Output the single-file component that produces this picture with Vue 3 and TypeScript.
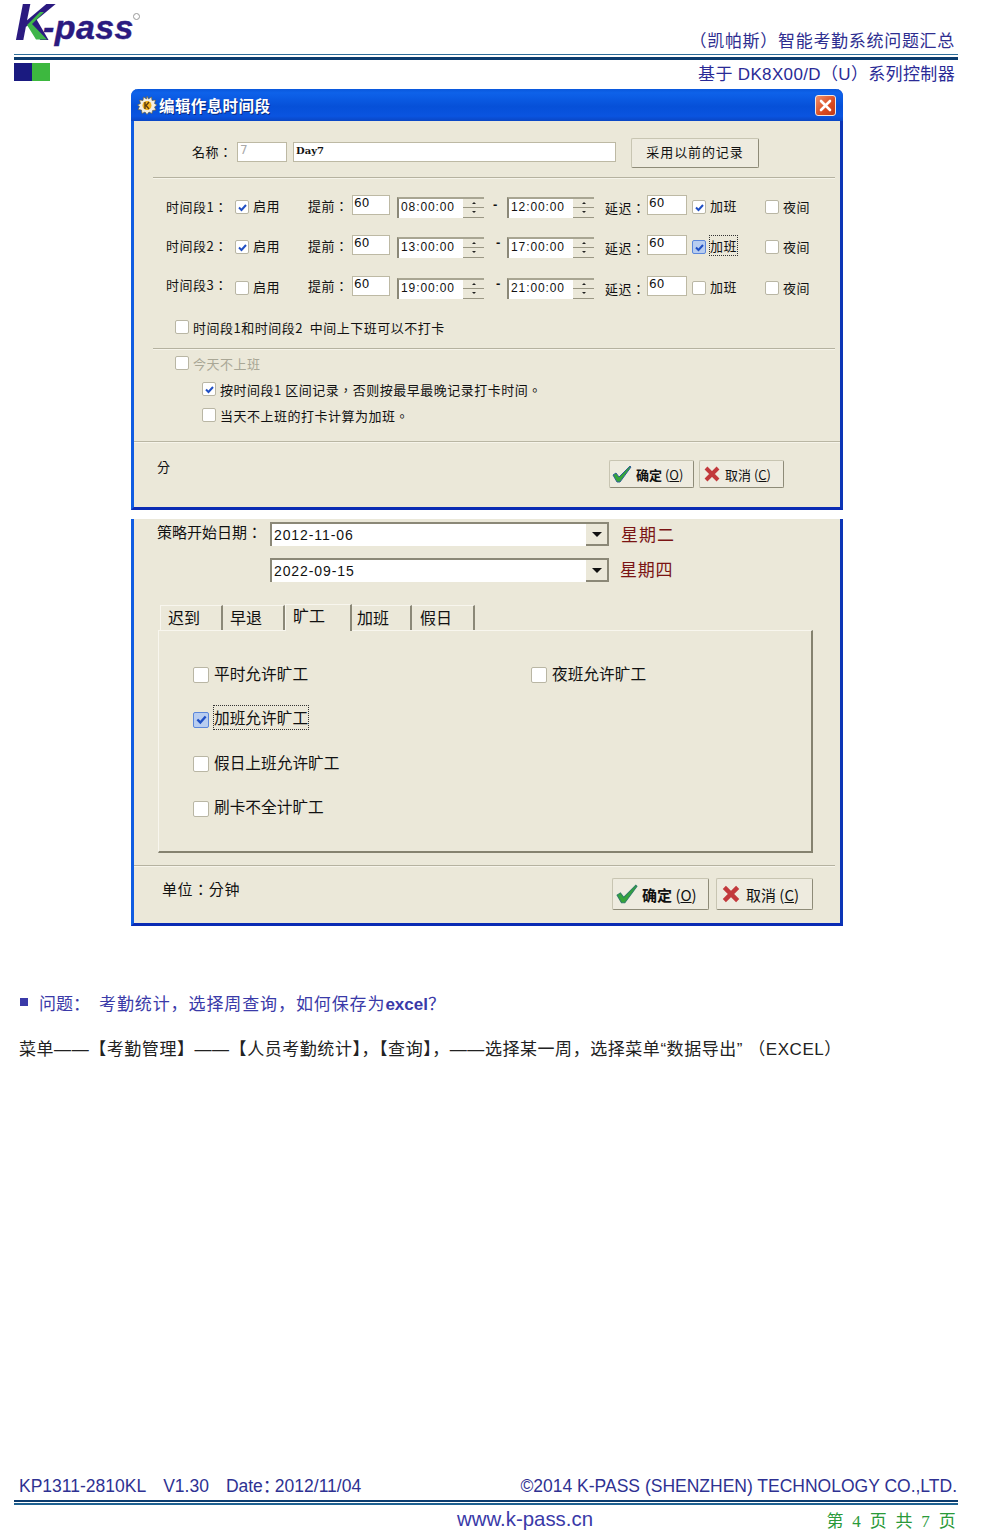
<script setup lang="ts">
interface Row {
  label: string
  early: boolean
  start: string
  end: string
  ot: boolean
  focus: boolean
  cls: string
}
const rows: Row[] = [
  { label: '时间段1：', early: true, start: '08:00:00', end: '12:00:00', ot: true, focus: false, cls: 'r1' },
  { label: '时间段2：', early: true, start: '13:00:00', end: '17:00:00', ot: true, focus: true, cls: 'r2' },
  { label: '时间段3：', early: false, start: '19:00:00', end: '21:00:00', ot: false, focus: false, cls: 'r3' }
]
const tabs = ['迟到', '早退', '旷工', '加班', '假日']
</script>

<template>
  <div class="page">
    <header class="head">
      <svg class="logo" width="130" height="50" viewBox="0 0 130 50">
        <text x="1" y="40" class="k">K</text>
        <polygon points="30,12 18,24 33,39.500 22,39.500 13,25 26,12" fill="#3fb54a" />
        <text x="29" y="39" class="pass">-pass</text>
        <circle cx="122.500" cy="16.500" r="3" fill="none" stroke="#999" stroke-width="1" />
      </svg>
      <div class="doc-title">（凯帕斯）智能考勤系统问题汇总</div>
    </header>
    <div class="rule top"><i></i><b></b></div>
    <div class="sub">
      <div class="squares"><span class="navy"></span><span class="green"></span></div>
      <div class="doc-sub">基于 DK8X00/D（U）系列控制器</div>
    </div>

    <section class="dlg first">
      <div class="titlebar">
        <svg width="20" height="20" viewBox="0 0 20 20" class="gear">
          <path d="M10 1l1.500 3 3-2 .5 3.500 3.500-.5-1 3.500 2.500 1.500-2.500 2 1.500 3-3.500.5-.5 3-3-1.500-2 2.500-2-2.500-3 1.500-.5-3.500-3.500-.5 1.500-3L.5 10l3-1.500-1-3.500 3.500.5.500-3.500 3 2z" fill="#f3f0e4" stroke="#6a5a2a" stroke-width=".6" />
          <circle cx="10" cy="10.500" r="4.500" fill="#f2b21e" />
          <path d="M8 7v7M12 7l-3 3.500 3 3.500" stroke="#5a3d10" stroke-width="1.400" fill="none" />
        </svg>
        <span class="title-text">编辑作息时间段</span>
        <span class="close">
          <svg width="13" height="13" viewBox="0 0 13 13"><path d="M2 2l9 9M11 2l-9 9" stroke="#fff" stroke-width="2.600" stroke-linecap="round" /></svg>
        </span>
      </div>
      <div class="body">
        <div class="name-row">
          <span class="lbl name-lbl">名称：</span>
          <span class="input id-in">7</span>
          <span class="input day-in">Day7</span>
          <span class="xp-btn prev">采用以前的记录</span>
        </div>
        <div class="sep inset"></div>

        <div class="slots">
          <div v-for="r in rows" :key="r.label" class="slot" :class="r.cls">
            <span class="lbl slot-lbl">{{ r.label }}</span>
            <label class="chk-line"><span class="cb" :class="{ on: r.early }"><svg v-if="r.early" width="11" height="11" viewBox="0 0 11 11"><path d="M2 5.500l2.500 2.500L9 3" fill="none" stroke="#1f4fc4" stroke-width="2" /></svg></span>启用</label>
            <span class="lbl early">提前：</span>
            <span class="input num">60</span>
            <span class="time"><em>{{ r.start }}</em><span class="spin"><i class="up"></i><i class="down"></i></span></span>
            <span class="dash">-</span>
            <span class="time"><em>{{ r.end }}</em><span class="spin"><i class="up"></i><i class="down"></i></span></span>
            <span class="lbl late">延迟：</span>
            <span class="input num wide">60</span>
            <label class="chk-line"><span class="cb" :class="{ on: r.ot, hot: r.focus }"><svg v-if="r.ot" width="11" height="11" viewBox="0 0 11 11"><path d="M2 5.500l2.500 2.500L9 3" fill="none" stroke="#1f4fc4" stroke-width="2" /></svg></span><span :class="{ dotted: r.focus }">加班</span></label>
            <label class="chk-line night"><span class="cb"></span>夜间</label>
          </div>
        </div>

        <label class="chk-line free"><span class="cb"></span>时间段1和时间段2&nbsp; 中间上下班可以不打卡</label>
        <div class="sep inset s2"></div>
        <label class="chk-line free off"><span class="cb"></span>今天不上班</label>
        <label class="chk-line nested n1"><span class="cb on"><svg width="11" height="11" viewBox="0 0 11 11"><path d="M2 5.500l2.500 2.500L9 3" fill="none" stroke="#1f4fc4" stroke-width="2" /></svg></span>按时间段1 区间记录，否则按最早最晚记录打卡时间。</label>
        <label class="chk-line nested n2"><span class="cb"></span>当天不上班的打卡计算为加班。</label>
        <div class="sep full"></div>
        <div class="foot">
          <span class="lbl unit">分</span>
          <div class="btns">
            <span class="xp-btn act ok">
              <svg width="22" height="20" viewBox="0 0 22 20"><path d="M2 11l3-2 3 4L19 2l1 1L9 18H6z" fill="#35a53a" stroke="#2f5f96" stroke-width="1" /></svg>
              <span><b>确定</b> (<u>O</u>)</span>
            </span>
            <span class="xp-btn act no">
              <svg width="18" height="18" viewBox="0 0 18 18"><path d="M3 3l12 12M15 3L3 15" stroke="#c2393c" stroke-width="4" /></svg>
              <span>取消 (<u>C</u>)</span>
            </span>
          </div>
        </div>
      </div>
    </section>

    <section class="dlg second">
      <div class="body b2">
        <div class="date-row d1">
          <span class="lbl date-lbl">策略开始日期：</span>
          <span class="combo"><em>2012-11-06</em><span class="drop"><i></i></span></span>
          <span class="weekday">星期二</span>
        </div>
        <div class="date-row d2">
          <span class="date-lbl"></span>
          <span class="combo"><em>2022-09-15</em><span class="drop"><i></i></span></span>
          <span class="weekday">星期四</span>
        </div>
        <div class="tabs">
          <span v-for="(t, i) in tabs" :key="t" class="tab" :class="{ active: i === 2 }">{{ t }}</span>
        </div>
        <div class="panel">
          <div class="panel-grid">
            <label class="chk-big"><span class="cb big"></span>平时允许旷工</label>
            <label class="chk-big"><span class="cb big"></span>夜班允许旷工</label>
            <label class="chk-big"><span class="cb big on hot"><svg width="13" height="13" viewBox="0 0 11 11"><path d="M2 5.500l2.500 2.500L9 3" fill="none" stroke="#1f4fc4" stroke-width="2" /></svg></span><span class="dotted">加班允许旷工</span></label>
            <span></span>
            <label class="chk-big"><span class="cb big"></span>假日上班允许旷工</label>
            <span></span>
            <label class="chk-big"><span class="cb big"></span>刷卡不全计旷工</label>
          </div>
        </div>
        <div class="sep w2"></div>
        <div class="foot f2">
          <span class="lbl unit2">单位：分钟</span>
          <div class="btns big-btns">
            <span class="xp-btn act2 ok2">
              <svg width="26" height="22" viewBox="0 0 22 20"><path d="M2 11l3-2 3 4L19 2l1 1L9 18H6z" fill="#35a53a" stroke="#2f7f66" stroke-width="1" /></svg>
              <span><b>确定</b> (<u>O</u>)</span>
            </span>
            <span class="xp-btn act2 no2">
              <svg width="20" height="20" viewBox="0 0 18 18"><path d="M3 3l12 12M15 3L3 15" stroke="#c2393c" stroke-width="4" /></svg>
              <span>取消 (<u>C</u>)</span>
            </span>
          </div>
        </div>
      </div>
    </section>

    <div class="question"><span class="bullet"></span><span class="q1">问题：</span><span class="q2">考勤统计，选择周查询，如何保存为<b>excel</b>？</span></div>
    <p class="answer">菜单——【考勤管理】——【人员考勤统计】，【查询】，——选择某一周，选择菜单“数据导出” （EXCEL）</p>

    <footer class="page-foot">
      <div class="foot-top">
        <span class="ver"><span>KP1311-2810KL</span><span>V1.30</span><span>Date<span class="fw">：</span>2012/11/04</span></span>
        <span>©2014 K-PASS (SHENZHEN) TECHNOLOGY CO.,LTD.</span>
      </div>
      <div class="rule bottom"><i></i><b></b></div>
      <div class="foot-bottom">
        <span class="site">www.k-pass.cn</span>
        <span class="pageno">第 4 页 共 7 页</span>
      </div>
    </footer>
  </div>
</template>

<style>
html, body { margin: 0; background: #fff; }
</style>

<style scoped>
.page {
  width: 1000px;
  height: 1537px;
  box-sizing: border-box;
  padding: 0 42px 0 14px;
  display: flex;
  flex-direction: column;
  overflow: hidden;
  font-family: "Liberation Sans", "Noto Sans CJK SC", sans-serif;
  color: #111;
}
.head { height: 54px; display: flex; justify-content: space-between; align-items: flex-end; }
.logo { align-self: flex-start; overflow: visible; }
.k { font: italic 700 52px "Liberation Sans", sans-serif; fill: #2b1a80; }
.pass { font: italic 700 34px "Liberation Sans", sans-serif; fill: #2b1a80; stroke: #2b1a80; stroke-width: .4px; letter-spacing: .4px; }
.doc-title { color: #2e2e90; font: 17px "Liberation Serif", "Noto Sans CJK SC", serif; padding: 0 3px 1px 0; line-height: 22px; letter-spacing: .7px; }
.rule i { display: block; height: 1px; background: #2d6d99; }
.rule b { display: block; height: 3px; background: #0c3c6e; margin-top: 2px; }
.rule.top { height: 6px; }
.sub { height: 29px; display: flex; justify-content: space-between; align-items: flex-start; }
.squares { display: flex; height: 18px; margin-top: 3px; }
.squares span { width: 18px; }
.navy { background: #1a1a80; }
.green { background: #3db83f; }
.doc-sub { color: #2a2a96; font: 17px/22px "Liberation Sans", "Noto Sans CJK SC", sans-serif; padding: 4px 3px 0 0; letter-spacing: .35px; }

.dlg { margin-left: 117px; width: 712px; box-sizing: border-box; background: #ebe8d9; }
.first { height: 421px; border-radius: 7px 7px 0 0; border-left: 3px solid #0f5ce2; border-right: 3px solid #0c35b6; border-bottom: 3px solid #0a2bb4; display: flex; flex-direction: column; }
.titlebar {
  height: 32px; margin: 0 -3px; padding: 0 7px 0 6px;
  border-radius: 7px 7px 0 0;
  background: linear-gradient(#0a58dc 0%, #0e62ea 12%, #0650d8 55%, #0a54e0 85%, #0a46c4 100%);
  display: flex; align-items: center; gap: 2px;
  flex: none;
}
.title-text { color: #fff; font: 700 15.500px "Noto Sans CJK SC", sans-serif; letter-spacing: .4px; text-shadow: 1px 1px 0 #0a2a80; }
.close { margin-left: auto; width: 21px; height: 21px; border: 1px solid #f2e6e0; border-radius: 3px; background: linear-gradient(135deg, #f0906a, #d94a20 60%, #c03a18); display: flex; align-items: center; justify-content: center; box-sizing: border-box; }
.body { flex: 1; display: flex; flex-direction: column; font-size: 13px; }
.lbl, .chk-line { font: 13px "Noto Sans CJK TC", "Noto Sans CJK SC", sans-serif; letter-spacing: .5px; color: #111; white-space: nowrap; }
.name-row { display: flex; align-items: center; height: 33px; margin-top: 14px; padding-left: 58px; }
.name-lbl { width: 45px; }
.input { background: #fff; box-sizing: border-box; border: 1px solid #bdb9a4; font: 12px "DejaVu Sans", sans-serif; line-height: 14px; display: block; }
.id-in { width: 50px; height: 20px; color: #aaa; padding-left: 2px; }
.day-in { width: 323px; height: 20px; margin-left: 6px; padding-left: 2px; font: 700 10px "DejaVu Serif", serif; line-height: 15px; }
.xp-btn { box-sizing: border-box; display: flex; align-items: center; justify-content: center; background: #eeebdf; border: 1px solid #c8c5b2; border-right-color: #8e8b78; border-bottom-color: #8e8b78; border-radius: 2px; font: 13px "Noto Sans CJK SC", sans-serif; }
.prev { width: 128px; height: 30px; margin: 2px 0 0 15px; padding-bottom: 3px; letter-spacing: .9px; }
.sep.inset { margin: 0 5px 0 19px; border-top: 1px solid #b5b2a0; border-bottom: 1px solid #f6f4ea; }
.name-row + .sep { margin-top: 9px; }
.slots { margin-top: 8px; }
.slot { display: grid; grid-template-columns: 69px 73px 44px 45px 93px 17px 98px 42px 45px 73px 60px; align-items: center; padding-left: 32px; height: 40px; }
.slot.r3 { height: 42px; }
.chk-line { display: flex; align-items: center; gap: 4px; }
.slot .chk-line { margin-top: -4px; }
.slot .chk-line .cb { margin-top: 4px; }
.slot .night { margin-top: -2px; }
.slot .night .cb { margin-top: 2px; }
.slot .early { margin-top: -4px; }
.slot-lbl { margin-top: -2px; }
.r2 .slot-lbl { margin-top: -4px; }
.r3 .slot-lbl { margin-top: -8px; }
.r3 .early { margin-top: -6px; }
.cb { width: 14px; height: 14px; flex: none; box-sizing: border-box; background: #fff; border: 1px solid #b9b6a4; border-radius: 2px; display: flex; align-items: center; justify-content: center; }
.cb.hot { background: #b8cdf0; border-color: #5c87da; }
.dotted { outline: 1px dotted #333; outline-offset: 0; }
.num { width: 38px; height: 20px; padding-left: 1px; margin-top: -4px; }
.num.wide { width: 40px; }
.time { width: 87px; height: 21px; box-sizing: border-box; background: #fff; border-left: 2px solid #8b8877; border-top: 2px solid #a8a592; display: flex; justify-content: space-between; }
.time em { font: normal 12px "Liberation Sans", sans-serif; letter-spacing: .9px; line-height: 16px; padding-left: 2px; }
.spin { width: 21px; display: flex; flex-direction: column; background: #ebe8d9; }
.spin i { flex: 1; display: flex; justify-content: center; align-items: center; border-bottom: 1px solid #9a9784; }
.spin i::after { content: ""; border: 2.500px solid transparent; }
.spin .up::after { border-bottom-color: #222; border-top-width: 0; }
.spin .down::after { border-top-color: #222; border-bottom-width: 0; }
.dash { font: 700 13px "Liberation Sans", sans-serif; padding-left: 3px; margin-top: -5px; }
.r2 .dash { padding-left: 6px; margin-top: -10px; }
.r3 .dash { padding-left: 6px; margin-top: -9px; }
.free { margin-left: 41px; }
.free.chk-line:not(.off) { margin-top: 9px; height: 18px; }
.sep.s2 { margin-top: 12px; }
.chk-line.off { color: #a9a796; margin-top: 4px; height: 18px; }
.nested { margin-left: 68px; height: 18px; }
.n1 { margin-top: 8px; }
.n2 { margin-top: 8px; }
.sep.full { margin-top: 17px; border-top: 1px solid #b9b6a3; border-bottom: 1px solid #f6f4ea; }
.foot { display: flex; justify-content: space-between; padding: 17px 56px 0 23px; }
.unit { margin-top: -3px; }
.btns { display: flex; gap: 5px; }
.act { width: 85px; height: 28px; font-size: 13px; justify-content: flex-start; }
.act.ok { padding-left: 1px; gap: 3px; }
.act.no { padding-left: 3px; gap: 4px; }
.act2 { width: 97px; height: 32px; font-size: 15px; justify-content: flex-start; }
.act2.ok2 { padding-left: 1px; gap: 2px; }
.act2.no2 { padding-left: 4px; gap: 5px; }
.act b, .act2 b { font-weight: 700; }

.second { height: 407px; border-left: 3px solid #0f5ce2; border-right: 3px solid #0c35b6; border-bottom: 3px solid #0a2bb4; margin-top: 9px; display: flex; flex-direction: column; }
.date-row { display: flex; align-items: center; height: 24px; }
.d1 { margin-top: 3px; }
.d2 { margin-top: 12px; }
.date-lbl { width: 136px; padding-left: 23px; box-sizing: border-box; font: 15px "Noto Sans CJK TC", "Noto Sans CJK SC", sans-serif; letter-spacing: 0; white-space: nowrap; margin-top: -6px; }
.combo { width: 339px; height: 24px; box-sizing: border-box; background: #fff; border-left: 2px solid #8b8877; border-top: 2px solid #8b8877; display: flex; justify-content: space-between; }
.combo em { font: normal 14px "Liberation Sans", sans-serif; letter-spacing: .9px; line-height: 22px; padding-left: 2px; }
.drop { width: 21px; background: #ebe8d9; border-right: 2px solid #8b8877; border-bottom: 2px solid #8b8877; display: flex; align-items: center; justify-content: center; }
.drop i { border: 5px solid transparent; border-top: 5px solid #111; border-bottom: 0; }
.weekday { color: #7a1414; font: 17px "Noto Sans CJK SC", sans-serif; letter-spacing: 1px; margin: -2px 0 0 12px; }
.d2 .weekday { margin: -4px 0 0 11px; letter-spacing: .8px; }
.tabs { display: flex; margin: 21px 0 0 26px; height: 27px; align-items: flex-end; position: relative; z-index: 1; }
.tab { height: 25px; box-sizing: border-box; width: 62px; padding: 0 0 0 7px; font: 16px/22px "Noto Sans CJK SC", sans-serif; border-right: 2px solid #8b8877; border-top: 1px solid #f8f6ee; }
.tab:first-child { width: 63px; border-left: 1px solid #f8f6ee; }
.tab:nth-child(4) { width: 60px; padding-left: 5px; }
.tab:last-child { width: 63px; padding-left: 8px; }
.tab.active { height: 27px; width: 67px; line-height: 21px; background: #ebe8d9; padding-left: 7px; border-left: 1px solid #f8f6ee; margin-bottom: -1px; }
.panel { margin: 0 27px 0 24px; height: 223px; box-sizing: border-box; border-left: 1px solid #f8f6ee; border-top: 1px solid #f8f6ee; border-right: 2px solid #85826f; border-bottom: 2px solid #85826f; padding: 31px 0 0 34px; }
.panel-grid { display: grid; grid-template-columns: 338px 1fr; grid-auto-rows: 44.500px; }
.chk-big { display: flex; align-items: center; gap: 5px; font: 15.700px "Noto Sans CJK SC", sans-serif; height: 22px; white-space: nowrap; }
.cb.big { width: 16px; height: 16px; margin-top: 4px; }
.sep.w2 { margin: 12px 5px 0 0; border-top: 1px solid #b5b2a0; border-bottom: 1px solid #f6f4ea; }
.f2 { padding: 11px 27px 0 28px; }
.unit2 { font-size: 15px; letter-spacing: .6px; }
.big-btns { gap: 7px; }

.question { margin-top: 66px; height: 20px; display: flex; align-items: center; color: #3a3aa8; font: 17px "Liberation Sans", "Noto Sans CJK SC", sans-serif; padding-left: 6px; }
.bullet { width: 8px; height: 8px; background: #3a3aa8; margin-right: 11px; }
.q1 { width: 60px; }
.q2 { letter-spacing: .9px; }
.q2 b { letter-spacing: 0; }
.answer { margin: 28px 0 0 5px; font: 17px "Liberation Sans", "Noto Sans CJK SC", sans-serif; line-height: 20px; white-space: nowrap; color: #222; letter-spacing: .55px; }

.page-foot { margin-top: auto; padding: 0 0 6px; }
.foot-top { display: flex; justify-content: space-between; color: #2e3192; font: 17.500px/22px "Liberation Sans", "Noto Sans CJK SC", sans-serif; padding: 0 1px 3px 5px; white-space: nowrap; }
.ver { display: flex; gap: 17px; }
.fw { letter-spacing: -6.500px; margin-right: 1px; }
.rule.bottom i { height: 2px; background: #0c3c6e; margin: 0; }
.rule.bottom b { height: 2px; background: #1d6090; margin-top: 1px; }
.foot-bottom { display: flex; justify-content: space-between; padding: 2px 0 0 443px; height: 24px; align-items: center; }
.site { color: #3a3aa8; font: 20.400px "Liberation Sans", sans-serif; }
.pageno { color: #2a9a3a; font: 17px "Liberation Serif", "Noto Sans CJK SC", serif; letter-spacing: 2.300px; }
</style>
